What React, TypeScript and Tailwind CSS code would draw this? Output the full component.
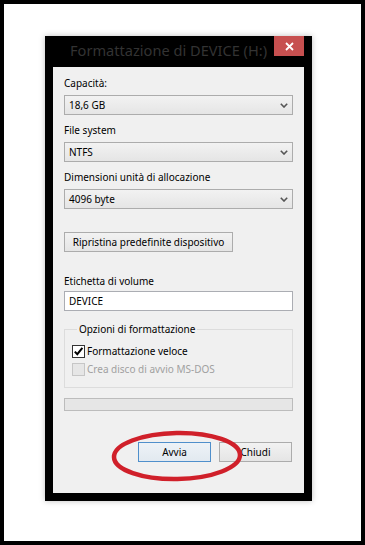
import React from "react";

function Chevron() {
  return (
    <svg width="8" height="5" viewBox="0 0 8 5" className="shrink-0">
      <path d="M0.8 0.8 L4 4 L7.2 0.8" fill="none" stroke="#555" strokeWidth="1.6" />
    </svg>
  );
}

function Combo({ value }: { value: string }) {
  return (
    <div className="mt-[4px] h-[20px] flex items-center justify-between border border-[#acacac] bg-[linear-gradient(#f2f2f2,#e5e5e5)] pl-[4px] pr-[4px] leading-[15px]">
      <span>{value}</span>
      <Chevron />
    </div>
  );
}

export default function App() {
  return (
    <div className="relative w-[365px] h-[545px] border-4 border-black bg-white font-['Noto_Sans',sans-serif] text-[10px] leading-[15px] text-black">
      <div className="ml-[41px] mt-[32px] w-[267px] h-[465px] bg-black flex flex-col shadow-[0_0_6px_rgba(0,0,0,0.25)]">
        {/* title bar */}
        <div className="h-[31px] flex items-start shrink-0">
          <div className="flex-1 pl-[25px] pt-[4px] text-[14.6px] leading-[20px] text-[#333333] whitespace-nowrap">
            Formattazione di DEVICE (H:)
          </div>
          <div className="w-[30px] h-[20px] mr-[8px] bg-[#c75050] flex items-center justify-center">
            <svg width="9" height="9" viewBox="0 0 9 9">
              <path d="M1 1 L8 8 M8 1 L1 8" stroke="#fff" strokeWidth="1.8" />
            </svg>
          </div>
        </div>

        {/* body */}
        <div className="mx-[8px] mb-[8px] flex-1 bg-[#f0f0f0] px-[11px] pt-[9px] flex flex-col">
          <div className="h-[15px]">Capacità:</div>
          <Combo value="18,6 GB" />

          <div className="h-[15px] mt-[8px]">File system</div>
          <Combo value="NTFS" />

          <div className="h-[15px] mt-[8px]">Dimensioni unità di allocazione</div>
          <Combo value="4096 byte" />

          <button
            type="button"
            className="mt-[23px] w-[169px] h-[20px] border border-[#acacac] bg-[linear-gradient(#f2f2f2,#e5e5e5)] text-[10px] leading-[15px] text-black text-center whitespace-nowrap"
          >
            Ripristina predefinite dispositivo
          </button>

          <div className="h-[15px] mt-[22px]">Etichetta di volume</div>
          <div className="mt-[2px] h-[20px] border border-[#abadb3] bg-white pl-[4px] flex items-center">
            DEVICE
          </div>

          <fieldset className="mt-[11px] border border-[#dcdcdc] pl-[7px] pt-[7px] pb-[10px]">
            <legend className="ml-[5px] px-[2px] leading-[15px]">Opzioni di formattazione</legend>
            <div className="flex items-center gap-[2px] h-[15px]">
              <div className="w-[13px] h-[13px] border border-[#333] bg-white flex items-center justify-center">
                <svg width="11" height="11" viewBox="0 0 11 11">
                  <path d="M1.8 5.6 L4.3 8.2 L9.4 1.8" fill="none" stroke="#000" strokeWidth="2" />
                </svg>
              </div>
              <span>Formattazione veloce</span>
            </div>
            <div className="flex items-center gap-[2px] h-[15px] mt-[3px] text-[#a0a0a0]">
              <div className="w-[13px] h-[13px] border border-[#c6c6c6] bg-[#e6e6e6]" />
              <span>Crea disco di avvio MS-DOS</span>
            </div>
          </fieldset>

          <div className="mt-[10px] h-[13px] border border-[#bcbcbc] bg-[#e6e6e6]" />

          <div className="mt-[31px] flex justify-end gap-[8px] pr-[1px]">
            <button
              type="button"
              className="w-[73px] h-[20px] border border-[#4f8fcb] bg-[linear-gradient(#edf2f7,#e2e9f0)] text-[10px] leading-[15px] text-black"
            >
              Avvia
            </button>
            <button
              type="button"
              className="w-[73px] h-[20px] border border-[#acacac] bg-[linear-gradient(#f2f2f2,#e5e5e5)] text-[10px] leading-[15px] text-black"
            >
              Chiudi
            </button>
          </div>
        </div>
      </div>

      {/* red annotation circle */}
      <svg className="absolute left-[105px] top-[425px]" width="145" height="62" viewBox="0 0 145 62">
        <ellipse cx="68" cy="27" rx="63" ry="23" fill="none" stroke="#d0202a" strokeWidth="4.5" transform="rotate(-1 68 27)" />
      </svg>
    </div>
  );
}
